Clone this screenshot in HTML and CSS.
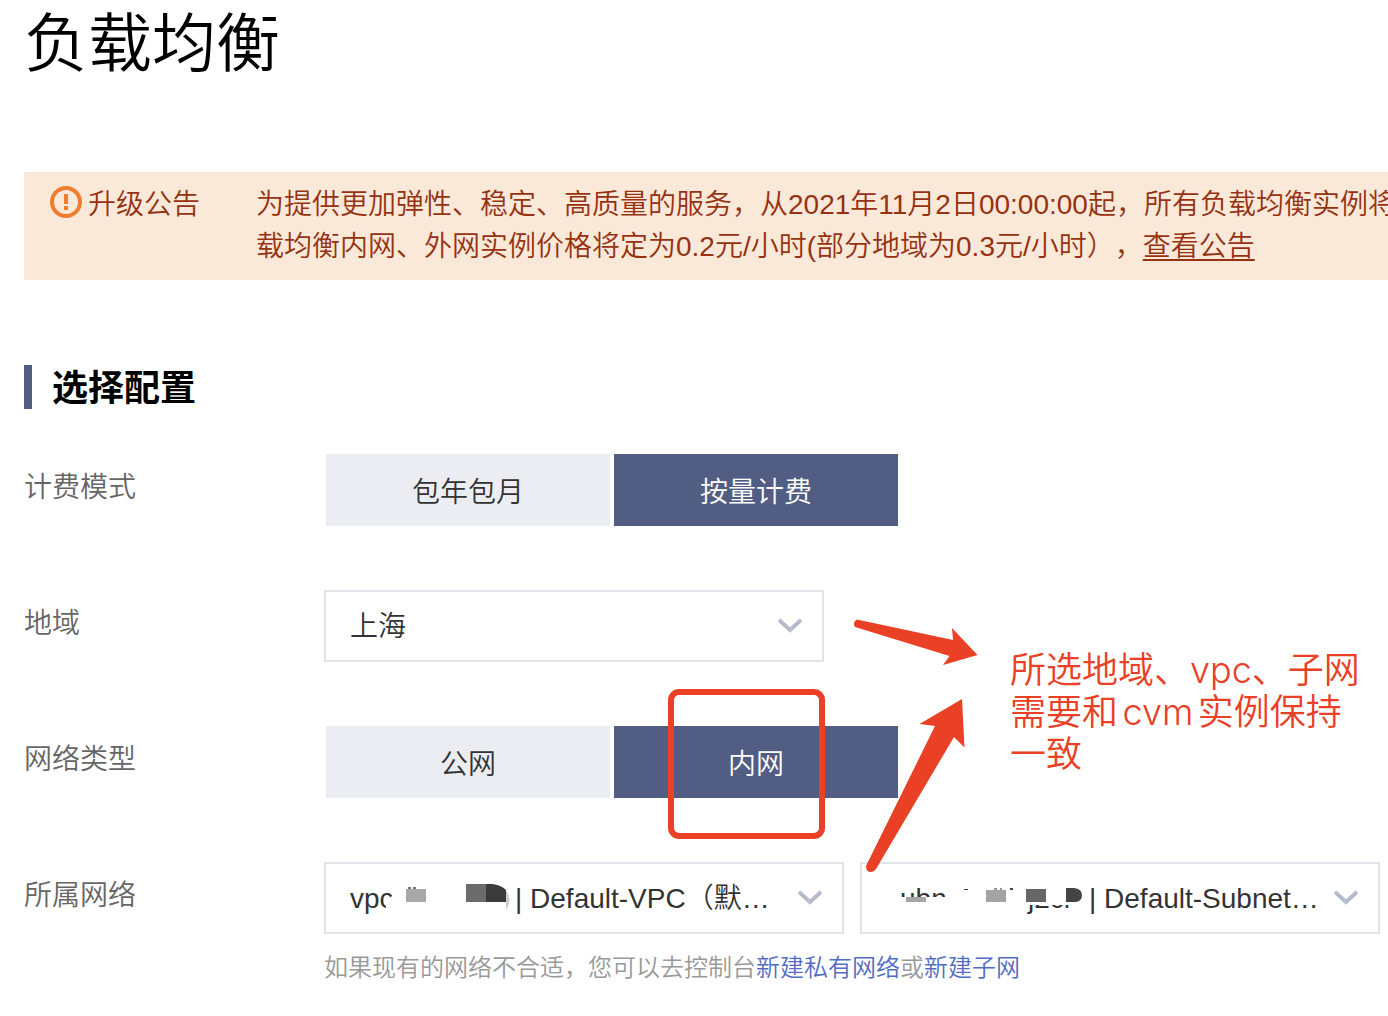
FILE: index.html
```html
<!DOCTYPE html>
<html lang="zh-CN">
<head>
<meta charset="utf-8">
<meta name="viewport" content="width=device-width, initial-scale=1">
<title>负载均衡</title>
<link rel="stylesheet" href="styles.css">
</head>
<body>
<main class="page">
  <h1 class="page-title">负载均衡</h1>

  <section class="notice">
    <div class="notice-head">
      <svg class="notice-icon" viewBox="0 0 32 32" aria-hidden="true">
        <circle cx="16" cy="16" r="14" fill="none" stroke="#f07c2e" stroke-width="4"/>
        <path d="M14 8h4v10h-4zM14 20h4v4h-4z" fill="#f07c2e"/>
      </svg>
      <span>升级公告</span>
    </div>
    <p class="notice-text">为提供更加弹性、稳定、高质量的服务，从2021年11月2日00:00:00起，所有负载均衡实例将<br>载均衡内网、外网实例价格将定为0.2元/小时(部分地域为0.3元/小时），<a class="notice-link" href="#">查看公告</a></p>
  </section>

  <h2 class="section-title">选择配置</h2>

  <form class="config">
    <div class="row">
      <span class="label" id="billing">计费模式</span>
      <div class="segment" role="group" aria-labelledby="billing">
        <button class="option" type="button" aria-pressed="false">包年包月</button>
        <button class="option" type="button" aria-pressed="true">按量计费</button>
      </div>
    </div>

    <div class="row">
      <label class="label" for="region">地域</label>
      <div class="picker region">
        <select class="select" id="region"><option>上海</option></select>
        <svg class="chevron" viewBox="0 0 24 16" aria-hidden="true"><path d="M1 2l11 10L23 2"/></svg>
      </div>
    </div>

    <div class="row">
      <span class="label" id="nettype">网络类型</span>
      <div class="segment" role="group" aria-labelledby="nettype">
        <button class="option" type="button" aria-pressed="false">公网</button>
        <button class="option" type="button" aria-pressed="true">内网<span class="highlight"></span></button>
      </div>
    </div>

    <div class="row">
      <label class="label" for="vpc">所属网络</label>
      <div class="field">
        <div class="networks">
          <div class="picker">
            <select class="select select-vpc" id="vpc"><option>| Default-VPC（默…</option></select>
            <svg class="redacted" viewBox="0 0 240 72" aria-hidden="true">
              <clipPath id="vpc-clip"><path d="M0 0H68V34L62 39V72H0z"/></clipPath>
              <text x="26" y="46" clip-path="url(#vpc-clip)">vpc</text>
              <path d="M82 27h20v13H82z" fill="#a8a8a8"/>
              <path d="M84 25h3v2h-3zM89 25h3v2h-3z" fill="#777"/>
              <path d="M142 22h20v18h-20z" fill="#6b6b6b"/>
              <path d="M162 22h6q9 1 14 6v12h-20z" fill="#393b3a"/>
              <path d="M182 28q7 10 0 20z" fill="#ccc"/>
            </svg>
            <svg class="chevron" viewBox="0 0 24 16" aria-hidden="true"><path d="M1 2l11 10L23 2"/></svg>
          </div>
          <div class="picker">
            <select class="select select-subnet" id="subnet" aria-label="子网"><option>| Default-Subnet…</option></select>
            <svg class="redacted" viewBox="0 0 240 72" aria-hidden="true">
              <clipPath id="subnet-clip"><path d="M40 24h46v11H40z"/></clipPath>
              <clipPath id="tail-clip"><path d="M160 43h55v12h-55z"/></clipPath>
              <text x="40" y="46" clip-path="url(#subnet-clip)">ubn</text>
              <text x="168" y="46" clip-path="url(#tail-clip)">j2cr</text>
              <path d="M46 35h20v5H46z" fill="#a5a5a5"/>
              <path d="M104 27h4v1h-4zM150 26h3v2h-3z" fill="#444"/>
              <path d="M126 28h20v12h-20z" fill="#a3a3a3"/>
              <path d="M134 26h3v2h-3zM140 26h2v2h-2z" fill="#999"/>
              <path d="M166 27h20v13h-20z" fill="#666"/>
              <path d="M206 26h8q8 1 8 7t-6 7h-10z" fill="#444"/>
            </svg>
            <svg class="chevron" viewBox="0 0 24 16" aria-hidden="true"><path d="M1 2l11 10L23 2"/></svg>
          </div>
        </div>
        <p class="hint">如果现有的网络不合适，您可以去控制台<a href="#">新建私有网络</a>或<a href="#">新建子网</a></p>
      </div>
    </div>

    <svg class="arrows" viewBox="850 614 130 262" aria-hidden="true">
      <path d="M857 619.500L953 640L952 628L977.500 655L943 665L949.500 656L855 627Q852 622 857 619.500Z"/>
      <path d="M962 699L919.500 724L935 726L866 866Q866 872 871 872Q874 872 876 869L954 737L964.500 747.500Z"/>
    </svg>
    <p class="remark">所选地域、vpc、子网<br>需要和cvm实例保持<br>一致</p>
  </form>
</main>
</body>
</html>
```
FILE: styles.css
```css
* {
  box-sizing: border-box;
}

body {
  margin: 0;
  background: #fff;
  color: #333;
  font-family: "Liberation Sans", "Noto Sans CJK SC", sans-serif;
  font-size: 28px;
  font-weight: 350;
  text-spacing-trim: space-all;
  overflow-x: hidden;
}

h1, h2, p {
  margin: 0;
}

.page {
  padding-left: 24px;
}

.page-title {
  color: #000;
  font-size: 64px;
  font-weight: 350;
  line-height: 88px;
}

.notice {
  display: flex;
  margin-top: 84px;
  padding: 12px 0 12px 26px;
  overflow: hidden;
  background: #fae9d8;
  color: #963212;
  line-height: 42px;
  white-space: nowrap;
}

.notice-head {
  display: flex;
  flex: 0 0 206px;
  gap: 6px;
}

.notice-icon {
  width: 32px;
  height: 32px;
  margin-top: 2px;
}

.notice-link {
  color: inherit;
  text-decoration-thickness: 2px;
  text-underline-offset: 3px;
}

.section-title {
  height: 44px;
  margin-top: 85px;
  padding-left: 20px;
  border-left: 8px solid #525d84;
  color: #000;
  font-size: 36px;
  font-weight: 700;
  line-height: 48px;
}

.config {
  position: relative;
  display: grid;
  gap: 64px;
  margin-top: 45px;
}

.row {
  display: grid;
  grid-template-columns: 300px 1fr;
}

.label {
  color: #666;
  line-height: 68px;
}

.segment {
  display: flex;
  gap: 4px;
  padding-left: 2px;
}

.option {
  position: relative;
  width: 284px;
  height: 72px;
  padding: 0;
  border: 0;
  background: #ecedf2;
  color: #333;
  font: inherit;
}

.option[aria-pressed="true"] {
  background: #525d84;
  color: #fff;
}

.highlight {
  position: absolute;
  top: -37px;
  left: 54px;
  width: 157px;
  height: 150px;
  border: 6px solid #ea4025;
  border-radius: 11px;
}

.picker {
  position: relative;
  width: 520px;
  height: 72px;
}

.region {
  width: 500px;
}

.select {
  width: 100%;
  height: 100%;
  padding: 0 24px;
  border: 2px solid #e1e4eb;
  border-radius: 0;
  background: #fff;
  color: #333;
  font: inherit;
  appearance: none;
}

.select-vpc {
  padding: 0 0 0 189px;
}

.select-subnet {
  padding: 0 0 0 227px;
}

.chevron {
  position: absolute;
  top: 28px;
  right: 22px;
  width: 24px;
  height: 16px;
  fill: none;
  stroke: #b5bccb;
  stroke-width: 4;
  pointer-events: none;
}

.redacted {
  position: absolute;
  top: 0;
  left: 0;
  width: 240px;
  height: 72px;
  fill: #333;
  pointer-events: none;
}

.networks {
  display: flex;
  gap: 16px;
}

.hint {
  margin-top: 16px;
  color: #999;
  font-size: 24px;
  line-height: 36px;
}

.hint a {
  color: #536cc4;
  text-decoration: none;
}

.arrows {
  position: absolute;
  top: 160px;
  left: 826px;
  width: 130px;
  height: 262px;
  fill: #ea4025;
  pointer-events: none;
}

.remark {
  position: absolute;
  top: 195px;
  left: 986px;
  color: #ea4025;
  font-family: Inter, "Noto Sans CJK SC", sans-serif;
  font-size: 36px;
  line-height: 42px;
  text-autospace: normal;
  white-space: nowrap;
}
```
